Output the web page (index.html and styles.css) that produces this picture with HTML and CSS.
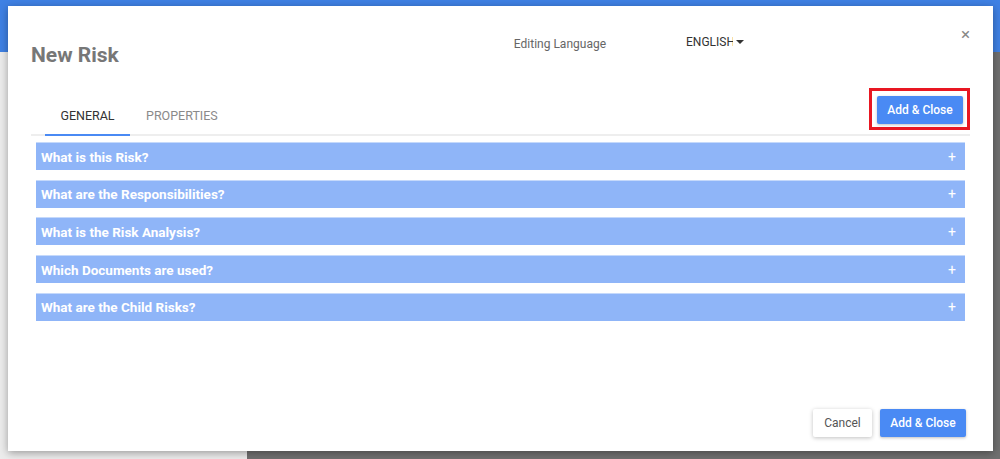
FILE: index.html
```html
<!DOCTYPE html>
<html>
<head>
<meta charset="utf-8">
<link rel="stylesheet" href="styles.css">
</head>
<body>
<div class="backdrop">
  <div class="topbar"></div>
  <div class="lower">
    <div class="side"></div>
    <div class="dim"></div>
  </div>
</div>
<div class="modal">
  <div class="head">
    <h1 class="title">New Risk</h1>
    <div class="lang-label">Editing Language</div>
    <div class="lang-select"><span class="lang-val">ENGLISH</span><span class="caret-box"><span class="caret"></span></span></div>
    <div class="close">×</div>
  </div>
  <div class="tabbar">
    <div class="tabs">
      <div class="tab active">GENERAL</div>
      <div class="tab">PROPERTIES</div>
    </div>
    <div class="highlight"><button class="btn primary">Add &amp; Close</button></div>
  </div>
  <div class="panels">
    <div class="panel"><span>What is this Risk?</span><span class="plus">+</span></div>
    <div class="panel"><span>What are the Responsibilities?</span><span class="plus">+</span></div>
    <div class="panel"><span>What is the Risk Analysis?</span><span class="plus">+</span></div>
    <div class="panel"><span>Which Documents are used?</span><span class="plus">+</span></div>
    <div class="panel"><span>What are the Child Risks?</span><span class="plus">+</span></div>
  </div>
  <div class="footer">
    <button class="btn plain">Cancel</button>
    <button class="btn primary">Add &amp; Close</button>
  </div>
</div>
</body>
</html>
```

FILE: styles.css
```css
* { box-sizing: border-box; }
html, body { margin: 0; padding: 0; }
body {
  width: 1000px;
  height: 459px;
  overflow: hidden;
  font-family: Roboto, "Liberation Sans", sans-serif;
  position: relative;
}
.backdrop { display: flex; flex-direction: column; height: 459px; }
.topbar { height: 52px; background: #3f81e4; }
.lower { flex: 1; display: flex; }
.side { width: 247px; background: #ececec; }
.dim { flex: 1; background: #707070; }

.modal {
  position: absolute;
  left: 8px;
  top: 6px;
  width: 985px;
  height: 445px;
  background: #fff;
  box-shadow: 0 2px 8px rgba(0,0,0,0.35);
  display: flex;
  flex-direction: column;
}
.head {
  position: relative;
  height: 77px;
  display: flex;
  align-items: flex-start;
}
.title {
  margin: 37px 0 0 23px;
  font-size: 21px;
  font-weight: 700;
  color: #777;
  line-height: 24px;
}
.lang-label {
  margin: 31px 0 0 395px;
  font-size: 12px;
  color: #666;
  line-height: 14px;
}
.lang-select {
  margin: 29px 0 0 80px;
  display: flex;
  align-items: center;
  height: 14px;
}
.lang-val {
  white-space: nowrap;
  font-size: 12px;
  color: #333;
  line-height: 14px;
}
.caret-box {
  margin-left: -2px;
  background: #fff;
  padding: 0 0 0 3px;
  height: 14px;
  display: flex;
  align-items: center;
}
.caret {
  width: 0; height: 0;
  border-left: 4px solid transparent;
  border-right: 4px solid transparent;
  border-top: 4px solid #333;
}
.close {
  position: absolute;
  right: 23px;
  top: 19px;
  font-size: 17px;
  color: #888;
  line-height: 18px;
}

.tabbar {
  display: flex;
  justify-content: space-between;
  align-items: flex-start;
  padding: 0 23px 0 23px;
  height: 59px;
}
.tabs {
  display: flex;
  align-self: flex-end;
  margin-bottom: 6px;
  flex: 1;
  border-bottom: 2px solid #eeeeee;
  height: 46px;
}
.tab {
  font-size: 12.5px;
  color: #8a8a8a;
  padding: 0 16px;
  height: 44px;
  line-height: 20px;
  padding-top: 16px;
  text-align: center;
}
.tab.active {
  color: #333;
  border-bottom: 2px solid #4a8af4;
  margin-left: 14px;
  height: 46px;
  margin-bottom: -2px;
  width: 85px;
  padding: 16px 0 0;
}
.highlight {
  border: 3px solid #e81722;
  padding: 5px 4px 3px 5px;
  margin-top: 5px;
  margin-right: 0;
  height: 42px;
  margin-left: -101px;
  position: relative;
  z-index: 1;
  background: #fff;
}
.btn {
  font-family: Roboto, "Liberation Sans", sans-serif;
  font-size: 12px;
  height: 28px;
  border: none;
  border-radius: 2px;
  padding: 0;
  white-space: nowrap;
  cursor: pointer;
}
.btn.primary {
  background: #4a8af4;
  color: #fff;
  font-weight: 500;
  width: 86px;
  box-shadow: 0 1px 3px rgba(0,0,0,0.25);
}
.btn.plain {
  background: #fff;
  color: #555;
  width: 59px;
  box-shadow: 0 1px 4px rgba(0,0,0,0.25);
}

.panels {
  display: flex;
  flex-direction: column;
  gap: 9.7px;
  padding: 0 28px 0 28px;
}
.panel {
  height: 28px;
  background: #8fb5f8;
  border-top: 1px solid #c5d9fb;
  color: #fff;
  font-weight: 700;
  font-size: 13.5px;
  display: flex;
  align-items: center;
  justify-content: space-between;
  padding: 0 9px 0 5px;
}
.plus { font-weight: 400; font-size: 14px; }

.footer {
  margin-top: auto;
  display: flex;
  justify-content: flex-end;
  gap: 8px;
  padding: 0 27px 14px 0;
}
```
